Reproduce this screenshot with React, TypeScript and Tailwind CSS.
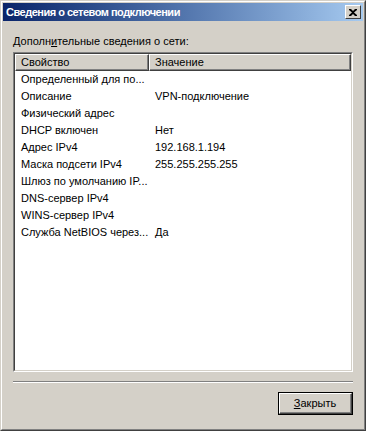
import React from "react";

const rows: [string, string][] = [
  ["Определенный для по...", ""],
  ["Описание", "VPN-подключение"],
  ["Физический адрес", ""],
  ["DHCP включен", "Нет"],
  ["Адрес IPv4", "192.168.1.194"],
  ["Маска подсети IPv4", "255.255.255.255"],
  ["Шлюз по умолчанию IP...", ""],
  ["DNS-сервер IPv4", ""],
  ["WINS-сервер IPv4", ""],
  ["Служба NetBIOS через...", "Да"],
];

export default function App() {
  return (
    <div
      className="w-[366px] h-[431px] bg-[#d4d0c8] text-[11px] text-black"
      style={{ fontFamily: '"Liberation Sans", Arial, sans-serif' }}
    >
      <div className="w-full h-full border border-t-[#d4d0c8] border-l-[#d4d0c8] border-r-[#404040] border-b-[#404040]">
        <div className="w-full h-full border border-t-white border-l-white border-r-[#808080] border-b-[#808080] p-px flex flex-col">
          {/* Title bar */}
          <div className="h-[18px] flex items-center pl-[3px] pr-[2px] bg-gradient-to-r from-[#0a246a] to-[#a6caf0] shrink-0">
            <span className="flex-1 text-white font-bold text-[11px] leading-none tracking-[-0.5px]">
              Сведения о сетевом подключении
            </span>
            <div className="w-[16px] h-[14px] bg-[#d4d0c8] border border-t-white border-l-white border-r-[#404040] border-b-[#404040] flex items-center justify-center">
              <svg width="8" height="7" viewBox="0 0 8 7">
                <path d="M0 0h2l2 2 2-2h2v1L5 3.5 8 6v1H6L4 5 2 7H0V6l3-2.5L0 1z" fill="#000" />
              </svg>
            </div>
          </div>

          {/* Body */}
          <div className="flex-1 flex flex-col px-[10px] pt-[13px] pb-[14px]">
            <div className="leading-[14px] mb-[4px]">
              Дополн<span className="underline">и</span>тельные сведения о сети:
            </div>
            <div className="h-[320px] border border-t-[#808080] border-l-[#808080] border-b-white border-r-white">
              <div className="w-full h-full border border-t-[#404040] border-l-[#404040] border-b-[#d4d0c8] border-r-[#d4d0c8] bg-white flex flex-col">
                <div className="flex h-[17px] shrink-0">
                  <div className="w-[134px] bg-[#d4d0c8] border-t border-l border-t-white border-l-white border-b border-r border-b-[#404040] border-r-[#404040]">
                    <div className="h-full border-b border-r border-b-[#808080] border-r-[#808080] pl-[5px] leading-[14px]">
                      Свойство
                    </div>
                  </div>
                  <div className="flex-1 bg-[#d4d0c8] border-t border-l border-t-white border-l-white border-b border-r border-b-[#404040] border-r-[#404040]">
                    <div className="h-full border-b border-r border-b-[#808080] border-r-[#808080] pl-[5px] leading-[14px]">
                      Значение
                    </div>
                  </div>
                </div>
                <div className="flex flex-col">
                  {rows.map(([k, v], i) => (
                    <div key={i} className="flex h-[17px] leading-[17px]">
                      <div className="w-[134px] pl-[6px] whitespace-nowrap overflow-hidden">{k}</div>
                      <div className="flex-1 pl-[6px] whitespace-nowrap">{v}</div>
                    </div>
                  ))}
                </div>
              </div>
            </div>

            <div className="mt-[9px] h-[2px] border-t border-t-[#808080] border-b border-b-white" />

            <div className="flex justify-end mt-[9px]">
              <div className="w-[75px] h-[23px] border border-black">
                <div className="w-full h-full border border-t-white border-l-white border-r-[#404040] border-b-[#404040]">
                  <div className="w-full h-full border-r border-b border-r-[#808080] border-b-[#808080] flex items-center justify-center">
                    <span>
                      <span className="underline">З</span>акрыть
                    </span>
                  </div>
                </div>
              </div>
            </div>
          </div>
        </div>
      </div>
    </div>
  );
}
